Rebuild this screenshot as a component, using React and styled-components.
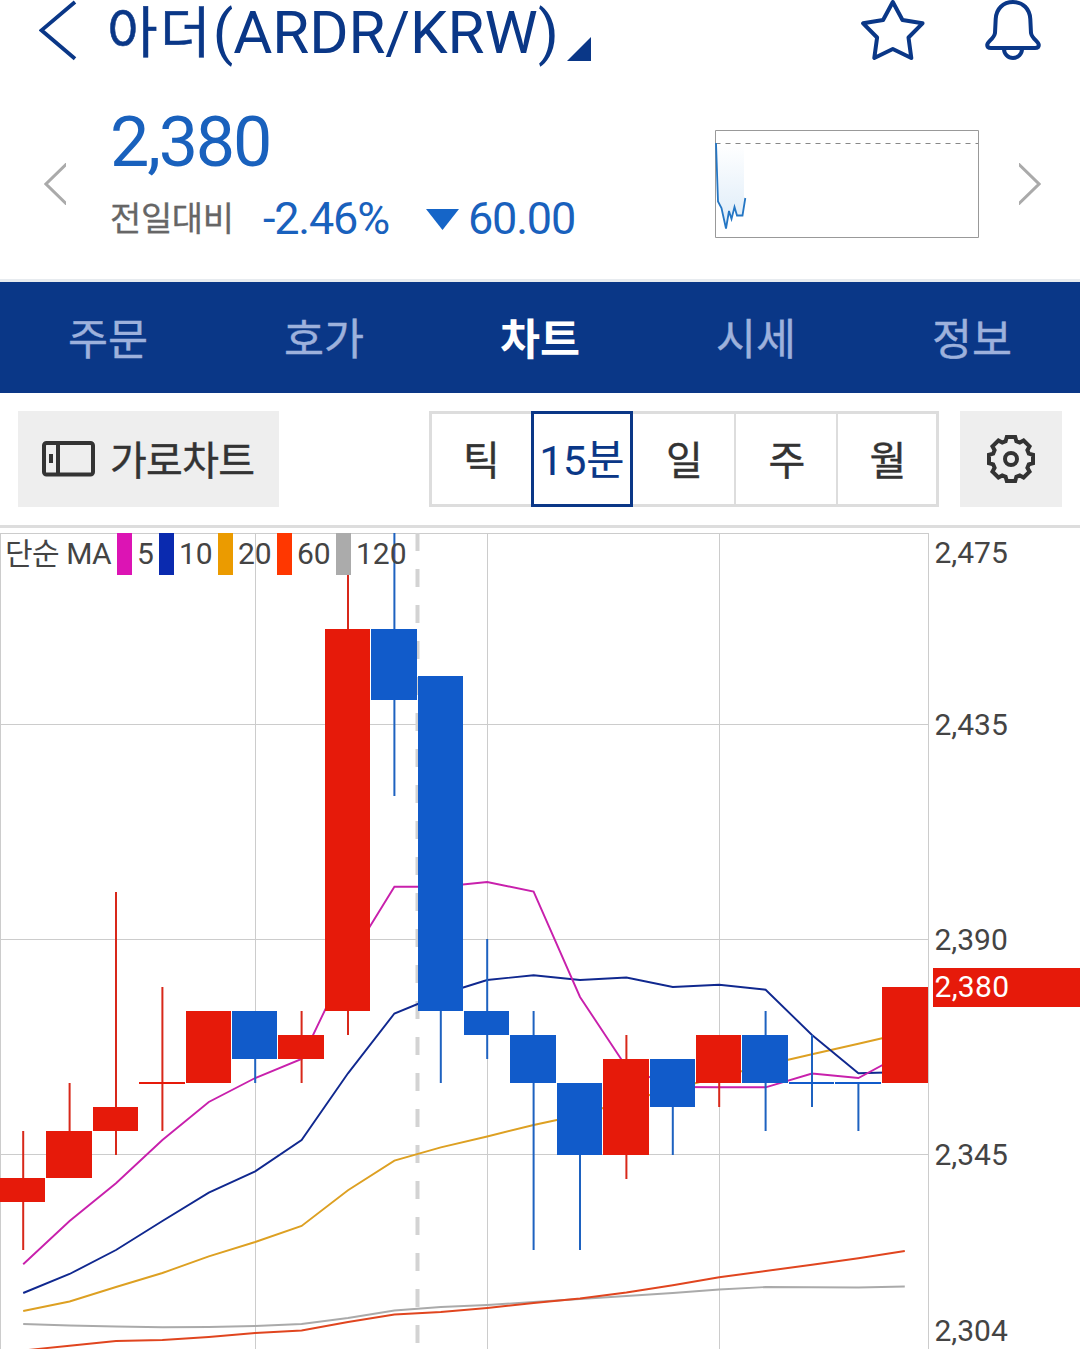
import React from "react"
import styled, { createGlobalStyle } from "styled-components"

const NAVY = "#0a3787"
const BLUE = "#115bca"
const RED = "#e61a0a"

const GlobalStyle = createGlobalStyle`
  * {
    box-sizing: border-box;
  }

  body {
    margin: 0;
    background: #fff;
    font-family: Roboto, "Noto Sans CJK KR", sans-serif;
  }
`

const Screen = styled.main`
  display: flex;
  flex-direction: column;
  width: 1080px;
  height: 1349px;
  overflow: hidden;
  background: #fff;
`

const Header = styled.header`
  display: flex;
  height: 84px;
  padding-left: 39px;
  padding-right: 39px;
`

const Title = styled.h1`
  display: flex;
  align-items: flex-start;
  margin: 0 0 0 30px;
  color: ${NAVY};
  font-size: 60px;
  font-weight: 400;
  line-height: 66px;
  letter-spacing: -0.1px;
  white-space: nowrap;
`

const CoinName = styled.span`
  font-size: 55px;
  letter-spacing: 2.3px;
  -webkit-text-stroke: 0.5px ${NAVY};
`

const TitleCaret = styled.svg`
  margin: 37px 0 0 8px;
`

const HeaderActions = styled.div`
  display: flex;
  gap: 60px;
  margin-left: auto;
`

const Summary = styled.section`
  display: flex;
  height: 198px;
  padding: 0 39px 0 44px;
  border-bottom: 3px solid #e7ebef;
`

const Pager = styled.svg`
  flex: none;
  margin-top: 79px;
`

const Quote = styled.div`
  width: 605px;
  margin-left: 44px;
  color: #1961bd;
`

const Price = styled.div`
  margin-top: 18px;
  font-size: 70px;
  line-height: 80px;
  letter-spacing: -2.2px;
`

const Change = styled.div`
  display: flex;
  align-items: baseline;
  margin-top: 10px;
  font-size: 45px;
  line-height: 54px;
  letter-spacing: -1.2px;
  white-space: nowrap;
`

const ChangeLabel = styled.span`
  width: 153px;
  padding-bottom: 3px;
  color: #666;
  font-size: 34px;
  letter-spacing: -0.4px;
  transform: translateY(-3px);
  -webkit-text-stroke: 0.3px #666;
`

const Percent = styled.span`
  width: 163px;
`

const DownArrow = styled.svg`
  margin-right: 9px;
  transform: translateY(-4px);
`

const Spark = styled.svg`
  flex: none;
  margin-top: 46px;
  margin-right: 39px;
`

const Tabs = styled.nav`
  display: grid;
  grid-template-columns: repeat(5, 1fr);
  height: 111px;
  background: ${NAVY};
`

const Tab = styled.a`
  color: ${props => (props.$active ? "#fff" : "#9db1dc")};
  font-size: 43.5px;
  font-weight: ${props => (props.$active ? 700 : 400)};
  line-height: 118px;
  text-align: center;
  -webkit-text-stroke: ${props => (props.$active ? 0 : 0.4)}px currentColor;
`

const Toolbar = styled.div`
  display: flex;
  height: 135px;
  padding: 18px;
  border-bottom: 3px solid #ddd;
`

const WideButton = styled.button`
  display: flex;
  align-items: center;
  width: 261px;
  height: 96px;
  padding: 0 0 0 24px;
  border: 0;
  background: #eee;
  color: #333;
  font: inherit;
  font-size: 40px;
  letter-spacing: -0.7px;
  white-space: nowrap;
  -webkit-text-stroke: 0.4px #333;

  svg {
    flex: none;
    margin-right: 15px;
  }

  span {
    padding-bottom: 2px;
  }
`

const Periods = styled.div`
  display: grid;
  grid-template-columns: 102px 102px 103px 102px 101px;
  height: 96px;
  margin-left: 150px;
`

const Period = styled.button`
  padding: 0 0 ${props => (props.$active ? 4 : 2)}px ${props => (props.$first || props.$active ? 0 : 2)}px;
  border: 3px solid ${props => (props.$active ? NAVY : "#ddd")};
  border-left-width: ${props => (props.$first || props.$active ? 3 : 0)}px;
  border-right-width: ${props => (props.$last || props.$active ? 3 : props.$first ? 0 : 2)}px;
  background: #fff;
  color: ${props => (props.$active ? NAVY : "#333")};
  font: inherit;
  font-size: ${props => (props.$active ? 41.5 : 40)}px;
  white-space: nowrap;
  -webkit-text-stroke: ${props => (props.$active ? 0.2 : 0.4)}px currentColor;
`

const SettingsButton = styled.button`
  width: 102px;
  height: 96px;
  margin-left: 21px;
  padding: 0;
  border: 0;
  background: #eee;

  svg {
    display: block;
    margin: 0 auto;
  }
`

const ChartArea = styled.section`
  position: relative;
  height: 821px;
`

const ChartSvg = styled.svg`
  display: block;
`

const AxisText = styled.text`
  fill: ${props => (props.$current ? "#fff" : "#444")};
  font-size: 30px;
  letter-spacing: ${props => (props.$current ? 0.3 : 0)}px;
`

const Legend = styled.div`
  position: absolute;
  top: 5px;
  left: 5px;
  display: flex;
  height: 42px;
  color: #444;
  font-size: 30px;
  line-height: 41px;
  white-space: nowrap;
`

const LegendTitle = styled.span`
  width: 112px;
  letter-spacing: -0.5px;
`

const LegendItem = styled.span`
  width: ${props => 25 + props.$digits * 17}px;
  padding-left: 5px;
  border-left: 15px solid ${props => props.$color};
`

const periods = ["틱", "15분", "일", "주", "월"]
const tabs = ["주문", "호가", "차트", "시세", "정보"]

// x, width, body top, body bottom, wick top, wick bottom, rising
const candles = [
  [0, 45, 1178, 1202, 1131, 1250, true],
  [46, 46, 1131, 1178, 1083, 1178, true],
  [93, 45, 1107, 1131, 892, 1155, true],
  [139, 46, 1082, 1084, 987, 1131, true],
  [186, 45, 1011, 1083, 1011, 1083, true],
  [232, 45, 1011, 1059, 1011, 1083, false],
  [278, 46, 1035, 1059, 1011, 1083, true],
  [325, 45, 629, 1011, 533, 1035, true],
  [371, 46, 629, 700, 533, 796, false],
  [418, 45, 676, 1011, 676, 1083, false],
  [464, 45, 1011, 1035, 939, 1059, false],
  [510, 46, 1035, 1083, 1011, 1250, false],
  [557, 45, 1083, 1155, 1083, 1250, false],
  [603, 46, 1059, 1155, 1035, 1179, true],
  [650, 45, 1059, 1107, 1059, 1155, false],
  [696, 45, 1035, 1083, 1035, 1107, true],
  [742, 46, 1035, 1083, 1011, 1131, false],
  [789, 45, 1082, 1084, 1035, 1107, false],
  [835, 46, 1082, 1084, 1083, 1131, false],
  [882, 46, 987, 1083, 987, 1083, true],
]

const averages = [
  {
    period: 120,
    color: "#ababab",
    line: "#aaa",
    ys: [1324, 1325.5, 1326.5, 1327.2, 1327, 1326, 1324, 1318, 1310.5, 1307, 1305, 1302, 1299, 1296, 1293, 1289.5, 1287, 1287.2, 1287.5, 1286.5],
  },
  {
    period: 60,
    color: "#ff3700",
    line: "#e0451f",
    ys: [1350.5, 1345.7, 1341, 1340, 1337, 1333, 1330.5, 1322, 1314.5, 1312, 1308, 1303, 1298.5, 1292.5, 1285.3, 1277.3, 1271, 1264.7, 1258.3, 1251],
  },
  {
    period: 20,
    color: "#eb9b00",
    line: "#dda022",
    ys: [1311, 1301.5, 1287, 1273, 1256.3, 1242, 1226, 1190.3, 1160.7, 1147.3, 1136.5, 1125, 1115, 1101, 1089, 1077, 1065, 1054.3, 1043.8, 1033],
  },
  {
    period: 10,
    color: "#0a2aaf",
    line: "#10288f",
    ys: [1293, 1274, 1250, 1221, 1192.7, 1171.3, 1140, 1073.3, 1013.5, 994.5, 980, 975.2, 980, 977.5, 987, 984.8, 989.7, 1035, 1073.3, 1072],
  },
  {
    period: 5,
    color: "#dc14b4",
    line: "#c820ac",
    ys: [1264.3, 1221, 1183.3, 1140, 1102, 1078, 1059, 962, 886.7, 886.7, 882, 891.5, 997, 1067, 1087, 1087.3, 1087.3, 1073.5, 1078, 1053],
  },
]

const axisLabels = [
  ["2,475", 563],
  ["2,435", 735],
  ["2,390", 950],
  ["2,345", 1165],
  ["2,304", 1341],
]

const toPoints = ys => ys.map((y, i) => `${(23.2 + i * 46.4).toFixed(1)},${y}`).join(" ")

const gearPoints = Array.from({ length: 8 })
  .flatMap((_, i) => {
    const a = (i * Math.PI) / 4
    return [[-5.4, -17.8], [-4.2, -22], [4.2, -22], [5.4, -17.8]].map(([x, y]) => {
      const px = x * Math.cos(a) - y * Math.sin(a)
      const py = x * Math.sin(a) + y * Math.cos(a)
      return `${px.toFixed(2)},${py.toFixed(2)}`
    })
  })
  .join(" ")

function CandleChart() {
  return (
    <ChartSvg width="1080" height="821" viewBox="0 528 1080 821">
      <g stroke="#ccc" strokeWidth="1">
        <path d="M0 533.5H928M0 724.5H928M0 939.5H928M0 1154.5H928" />
        <path d="M0.5 533V1349M255.5 533V1349M487.5 533V1349M719.5 533V1349M928.5 533V1349" />
      </g>
      <path d="M417.5 533V1349" stroke="#d3d3d3" strokeWidth="4" strokeDasharray="18 18" />
      {averages.map(({ period, line, ys }) => (
        <polyline key={period} points={toPoints(ys)} fill="none" stroke={line} strokeWidth="1.9" />
      ))}
      {candles.map(([x, w, top, bottom, high, low, rising], i) => (
        <g key={x} fill={rising ? RED : BLUE}>
          <rect x={23.2 + i * 46.4 - 1} y={high} width="2" height={low - high} fill={rising ? "#d8281a" : "#1e62c0"} />
          <rect x={x} y={top} width={w} height={bottom - top} />
        </g>
      ))}
      {axisLabels.map(([label, y]) => (
        <AxisText key={label} x="934.5" y={y}>
          {label}
        </AxisText>
      ))}
      <rect x="933" y="968" width="147" height="39" fill={RED} />
      <AxisText $current x="934.5" y="997">
        2,380
      </AxisText>
    </ChartSvg>
  )
}

export default function App() {
  return (
    <>
      <GlobalStyle />
      <Screen>
        <Header>
          <svg width="38" height="62" viewBox="39 0 38 62" fill="none" stroke={NAVY} strokeWidth="3.8">
            <path d="M75 2L41.5 30.3L75 58.7" />
          </svg>
          <Title>
            <CoinName>아더</CoinName>
            (ARDR/KRW)
          </Title>
          <TitleCaret width="24" height="24" viewBox="0 0 24 24">
            <path d="M24 0V24H0Z" fill={NAVY} />
          </TitleCaret>
          <HeaderActions>
            <svg width="64" height="62" viewBox="860.5 0 64 62" fill="none" stroke={NAVY} strokeWidth="4" strokeLinejoin="round">
              <path d="M892.3 2L902 20L922 23.3L908 37.5L910.8 58L892.3 49L873.8 58L876.6 37.5L862.6 23.3L882.6 20Z" />
            </svg>
            <svg width="56" height="62" viewBox="985 0 56 62" fill="none" stroke={NAVY} strokeWidth="4" strokeLinejoin="round">
              <path d="M1013 2C1003 2 996.2 9 995.7 19L995 33C994 39 987.2 41.5 987.2 45C987.2 47.3 989 48 991 48H1035C1037 48 1038.8 47.3 1038.8 45C1038.8 41.5 1032 39 1031 33L1030.3 19C1029.8 9 1023 2 1013 2Z" />
              <path d="M1004 49A9 9 0 0 0 1022 49" />
            </svg>
          </HeaderActions>
        </Header>

        <Summary>
          <Pager width="22" height="42" viewBox="44 163 22 42" fill="none" stroke="#aaa" strokeWidth="3">
            <path d="M68 162.5L46 184L68 205.5" />
          </Pager>
          <Quote>
            <Price>2,380</Price>
            <Change>
              <ChangeLabel>전일대비</ChangeLabel>
              <Percent>-2.46%</Percent>
              <DownArrow width="33" height="21" viewBox="0 0 33 21">
                <path d="M0 0H33L16.5 21Z" fill="#1565c8" />
              </DownArrow>
              60.00
            </Change>
          </Quote>
          <Spark width="265" height="108" viewBox="715 130 265 108">
            <defs>
              <linearGradient id="sparkFill" x1="0" y1="0" x2="0" y2="1">
                <stop offset="0" stopColor="#fff" />
                <stop offset="1" stopColor="#dcebf8" />
              </linearGradient>
            </defs>
            <path d="M716 144L718 201.5L721.5 208L726 229L729 211L731.5 219L734.5 207L737 215.5H742.5L744 202V144Z" fill="url(#sparkFill)" />
            <path d="M715.5 130.5H978.5V237.5H715.5Z" fill="none" stroke="#999" />
            <path d="M715.5 143.5H978" stroke="#888" strokeDasharray="5 5" />
            <path
              d="M716 143L718 201.5L721.5 208L723 215L726 228.5L729 211L731.5 219L734.5 207L737 215.5H742.5L745.3 198"
              fill="none"
              stroke="#2476c4"
              strokeWidth="1.8"
            />
          </Spark>
          <Pager width="22" height="42" viewBox="1019 163 22 42" fill="none" stroke="#aaa" strokeWidth="3">
            <path d="M1017 162.5L1039 184L1017 205.5" />
          </Pager>
        </Summary>

        <Tabs>
          {tabs.map(tab => (
            <Tab key={tab} $active={tab === "차트"}>
              {tab}
            </Tab>
          ))}
        </Tabs>

        <Toolbar>
          <WideButton>
            <svg width="53" height="36" viewBox="0 0 53 36" fill="none" stroke="#333" strokeWidth="4">
              <rect x="2" y="2" width="49" height="31.5" rx="2.5" />
              <path d="M16 2V33M9 13V22" />
            </svg>
            <span>가로차트</span>
          </WideButton>
          <Periods>
            {periods.map((period, i) => (
              <Period key={period} $active={i === 1} $first={i === 0} $last={i === 4}>
                {period}
              </Period>
            ))}
          </Periods>
          <SettingsButton>
            <svg width="50" height="50" viewBox="-25 -25 50 50" fill="none" stroke="#333" strokeWidth="4">
              <polygon points={gearPoints} />
              <circle r="6" />
            </svg>
          </SettingsButton>
        </Toolbar>

        <ChartArea>
          <CandleChart />
          <Legend>
            <LegendTitle>단순 MA</LegendTitle>
            {[...averages].reverse().map(({ period, color }) => (
              <LegendItem key={period} $color={color} $digits={String(period).length}>
                {period}
              </LegendItem>
            ))}
          </Legend>
        </ChartArea>
      </Screen>
    </>
  )
}
